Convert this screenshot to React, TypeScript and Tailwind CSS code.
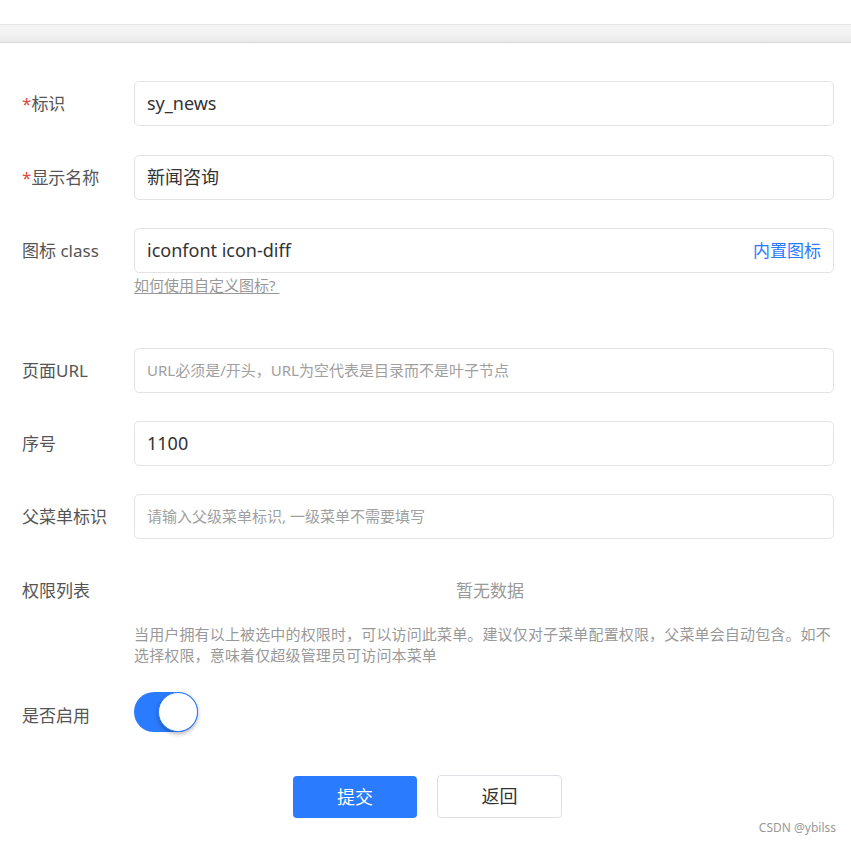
export default function App() {
  const font = { fontFamily: '"Noto Sans", "Noto Sans CJK SC", sans-serif' };
  return (
    <div className="min-h-[846px] bg-white text-[#333] relative" style={font}>
      <div className="h-6" />
      <div className="h-[19px] border-t border-[#e6e6e6] border-b border-b-[#d9d9d9] bg-gradient-to-b from-[#f4f4f4] via-[#f3f3f3] to-[#e9e9e9]" />

      <form className="pt-[38px] pr-[17px]">
        <Row label="标识" required>
          <Input value="sy_news" />
        </Row>
        <Row label="显示名称" required className="mt-[29px]">
          <Input value="新闻咨询" />
        </Row>
        <div className="mt-[28px]">
          <Row label="图标 class">
            <div className="h-[45px] flex-1 border border-[#e3e3e3] rounded-[5px] flex items-center px-3 justify-between">
              <span className="text-[18px]">iconfont icon-diff</span>
              <span className="text-[17px] text-[#2b7bff]">内置图标</span>
            </div>
          </Row>
          <div className="pl-[134px] mt-[2px] leading-[20px]">
            <span className="text-[15px] text-[#999] underline underline-offset-2">如何使用自定义图标?&nbsp;</span>
          </div>
        </div>
        <Row label="页面URL" className="mt-[53px]">
          <Input placeholder="URL必须是/开头，URL为空代表是目录而不是叶子节点" />
        </Row>
        <Row label="序号" className="mt-[28px]">
          <Input value="1100" />
        </Row>
        <Row label="父菜单标识" className="mt-[28px]">
          <Input placeholder="请输入父级菜单标识, 一级菜单不需要填写" />
        </Row>
        <div className="flex mt-[39px] h-[26px] items-center">
          <div className="w-[134px] pl-[22px] text-[17px] text-[#555]">权限列表</div>
          <div className="flex-1 text-center text-[17px] text-[#999] pl-[12px]">暂无数据</div>
        </div>
        <div className="pl-[134px] mt-[20px] text-[15px] tracking-[0.15px] leading-[21px] text-[#999]">
          当用户拥有以上被选中的权限时，可以访问此菜单。建议仅对子菜单配置权限，父菜单会自动包含。如不选择权限，意味着仅超级管理员可访问本菜单
        </div>
        <div className="flex items-center mt-[26px]">
          <div className="w-[134px] pl-[22px] text-[17px] text-[#555] pt-[8px]">是否启用</div>
          <div className="w-16 h-10 rounded-full bg-[#2b7bff] relative">
            <div className="absolute right-0 top-0 w-10 h-10 rounded-full bg-white border border-[#2b7bff] shadow-[0_2px_4px_rgba(0,0,0,0.3)]" />
          </div>
        </div>
        <div className="flex justify-center gap-5 mt-[44px] pl-[21px]">
          <button type="button" className="w-[124px] h-[42px] rounded-[4px] bg-[#2b7bff] text-white text-[18px]">提交</button>
          <button type="button" className="w-[125px] h-[43px] -mt-px rounded-[4px] border border-[#dcdfe6] bg-white text-[#333] text-[18px]">返回</button>
        </div>
      </form>
      <div className="absolute right-[15px] bottom-[9px] text-[12px] text-[#999]">CSDN @ybilss</div>
    </div>
  );
}

function Row({ label, required, children, className = '' }: { label: string; required?: boolean; children: React.ReactNode; className?: string }) {
  return (
    <div className={`flex items-center ${className}`}>
      <div className="w-[134px] pl-[22px] text-[17px] text-[#555] shrink-0">
        {required && <span className="text-[#e0473e]">*</span>}
        {label}
      </div>
      {children}
    </div>
  );
}

function Input({ value, placeholder }: { value?: string; placeholder?: string }) {
  return (
    <div className="h-[45px] flex-1 border border-[#e3e3e3] rounded-[5px] flex items-center px-3">
      {value ? (
        <span className="text-[18px] text-[#333]">{value}</span>
      ) : (
        <span className="text-[15px] text-[#a0a0a0]">{placeholder}</span>
      )}
    </div>
  );
}
